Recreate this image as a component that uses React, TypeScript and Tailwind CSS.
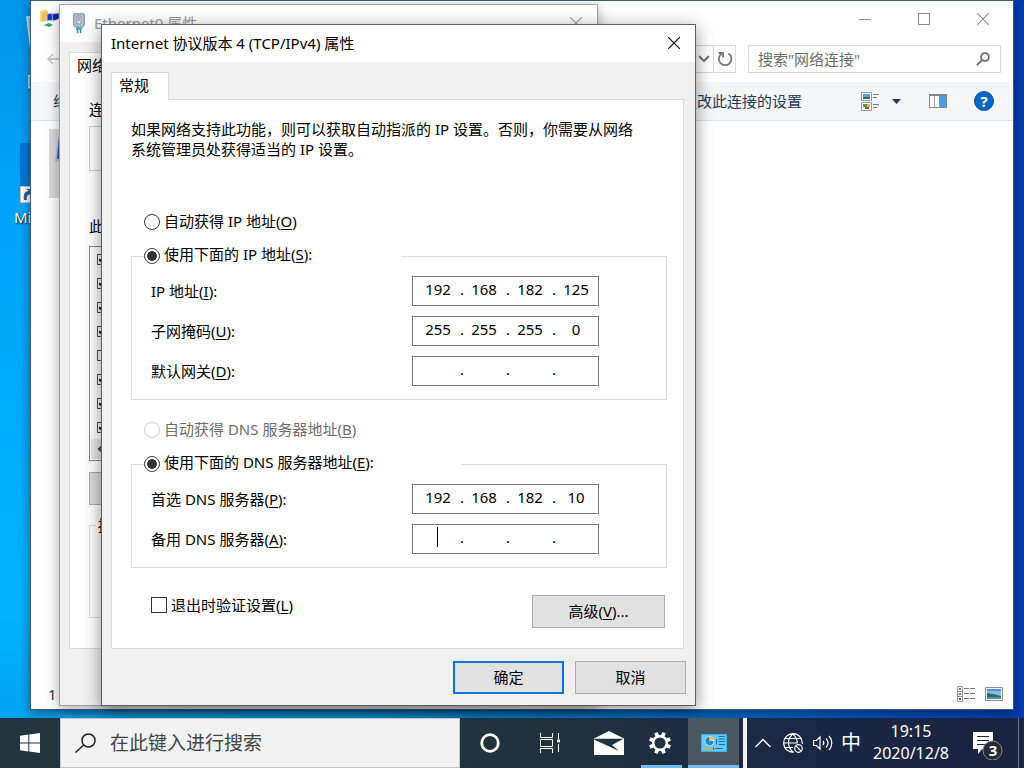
import React from "react";

const FONT = "font-['Noto_Sans','Noto_Sans_CJK_SC',sans-serif]";

function Key({ children }: { children: string }) {
  return <span className="underline decoration-1 underline-offset-2">{children}</span>;
}

function CloseGlyph({ className }: { className: string }) {
  return (
    <svg viewBox="0 0 12 12" className={className} fill="none" stroke="currentColor" strokeWidth="1.1">
      <path d="M0 0L12 12M12 0L0 12" />
    </svg>
  );
}

function IpField({ id, label, value, caret }: { id: string; label: string; value: string[]; caret?: boolean }) {
  return (
    <div role="group" className="relative flex h-[30px] w-[187px] items-center border border-[#7a7a7a] bg-white pb-1 pl-[5px]">
      {value.map((octet, i) => (
        <React.Fragment key={i}>
          {i > 0 && <span className="w-1.5 text-right">.</span>}
          <input
            id={i === 0 ? id : undefined}
            aria-label={`${label} ${i + 1}`}
            defaultValue={octet}
            className="h-5 w-10 bg-transparent text-center outline-none"
          />
        </React.Fragment>
      ))}
      {caret && <span className="absolute left-6 top-0.5 h-5 w-px bg-black" />}
    </div>
  );
}

function FieldRow({ id, name, k, value, caret }: { id: string; name: string; k: string; value: string[]; caret?: boolean }) {
  return (
    <div className="flex items-center">
      <label htmlFor={id} className="w-[261px]">
        {name}(<Key>{k}</Key>):
      </label>
      <IpField id={id} label={name} value={value} caret={caret} />
    </div>
  );
}

const radioClass =
  "size-4 shrink-0 appearance-none rounded-full border border-[#333] bg-white checked:bg-[radial-gradient(circle,#333_0,#333_4.5px,#fff_5.3px)] disabled:border-[#ccc]";

function RadioRow({ id, name, text, k, colon, checked, disabled }: { id: string; name: string; text: string; k: string; colon?: boolean; checked?: boolean; disabled?: boolean }) {
  return (
    <span className="flex h-6 items-center gap-1">
      <input type="radio" id={id} name={name} defaultChecked={checked} disabled={disabled} className={radioClass} />
      <label htmlFor={id} className={disabled ? "pb-0.5 text-[#6d6d6d]" : colon ? "pb-1" : "pb-0.5"}>
        {text}(<Key>{k}</Key>){colon ? ":" : ""}
      </label>
    </span>
  );
}

function IpDialog() {
  return (
    <section className="absolute left-[101px] top-6 isolate flex w-[595px] flex-col border border-[#5f5f5f] bg-[#f0f0f0] shadow-[0_4px_16px_rgba(0,0,0,0.45)]">
      <header className="flex h-[37px] items-center justify-between bg-white pb-0.5 pl-[9px] pr-[15px]">
        <h1>Internet 协议版本 4 (TCP/IPv4) 属性</h1>
        <button aria-label="关闭" className="text-black">
          <CloseGlyph className="size-3" />
        </button>
      </header>
      <div className="flex flex-col pl-[9px] pr-[11px] pt-2.5">
        <button role="tab" className="z-10 -mb-px h-7 w-[58px] border border-b-0 border-[#d9d9d9] bg-white pb-1 pr-3 text-center">
          常规
        </button>
        <div className="flex h-[550px] flex-col border border-[#d9d9d9] bg-white pl-[19px] pr-4 pt-[19px]">
          <p className="h-[41px] leading-5">
            如果网络支持此功能，则可以获取自动指派的 IP 设置。否则，你需要从网络
            <br />
            系统管理员处获得适当的 IP 设置。
          </p>
          <div className="ml-[13px] mt-[50px]">
            <RadioRow id="ip-auto" name="ip" text="自动获得 IP 地址" k="O" />
          </div>
          <fieldset className="mt-2.5 border border-[#dcdcdc] pb-[13px] pl-[19px]">
            <legend className="-ml-[7px] w-[257px]">
              <RadioRow id="ip-manual" name="ip" text="使用下面的 IP 地址" k="S" colon checked />
            </legend>
            <div className="mt-2 flex flex-col gap-2.5">
              <FieldRow id="ip" name="IP 地址" k="I" value={["192", "168", "182", "125"]} />
              <FieldRow id="mask" name="子网掩码" k="U" value={["255", "255", "255", "0"]} />
              <FieldRow id="gateway" name="默认网关" k="D" value={["", "", "", ""]} />
            </div>
          </fieldset>
          <div className="ml-[13px] mt-[18px]">
            <RadioRow id="dns-auto" name="dns" text="自动获得 DNS 服务器地址" k="B" disabled />
          </div>
          <fieldset className="mt-2.5 border border-[#dcdcdc] pb-[13px] pl-[19px]">
            <legend className="-ml-[7px] w-[317px]">
              <RadioRow id="dns-manual" name="dns" text="使用下面的 DNS 服务器地址" k="E" colon checked />
            </legend>
            <div className="mt-2 flex flex-col gap-2.5">
              <FieldRow id="dns1" name="首选 DNS 服务器" k="P" value={["192", "168", "182", "10"]} />
              <FieldRow id="dns2" name="备用 DNS 服务器" k="A" value={["", "", "", ""]} caret />
            </div>
          </fieldset>
          <div className="mt-[27px] flex items-start justify-between pl-5 pr-0.5">
            <span className="flex h-5 items-center gap-1">
              <input type="checkbox" id="validate" className="size-4 appearance-none border border-[#333] bg-white checked:bg-[#333]" />
              <label htmlFor="validate">
                退出时验证设置(<Key>L</Key>)
              </label>
            </span>
            <button className="h-[33px] w-[133px] border border-[#adadad] bg-[#e1e1e1] pb-0.5">
              高级(<Key>V</Key>)...
            </button>
          </div>
        </div>
      </div>
      <footer className="flex justify-end gap-[11px] pb-[11px] pr-[9px] pt-3">
        <button className="h-[33px] w-[111px] border-2 border-[#0078d7] bg-[#e1e1e1] pb-0.5">确定</button>
        <button className="h-[33px] w-[111px] border border-[#adadad] bg-[#e1e1e1] pb-0.5">取消</button>
      </footer>
    </section>
  );
}

function EthernetWindow() {
  const items = [true, true, true, true, false, true, true, true];
  return (
    <section className="absolute left-[59px] top-1 isolate flex h-[702px] w-[539px] flex-col border border-[#a0a0a0] bg-[#f0f0f0] shadow-[0_3px_12px_rgba(0,0,0,0.35)]">
      <header className="flex h-[37px] shrink-0 items-center bg-white pb-0.5 pl-[13px] pr-[15px] text-[#999]">
        <svg viewBox="0 0 12 20" className="mr-[9px] h-5 w-3 shrink-0">
          <path d="M1.5 .8h9l.8 1.8v8.9L9.5 14h-7L.7 11.500V2.600z" fill="#b7c4d3" stroke="#7b8794" strokeWidth="1.100" />
          <path d="M4 3h4v8H4z" fill="#dfe8f0" stroke="#8795a5" />
          <path d="M6 4v4" stroke="#70808f" />
          <path d="M3 14.500h6v2.200H3z" fill="#2f9fc4" />
          <path d="M4.500 16.500V20M7.500 16.500V20" stroke="#2b86a8" strokeWidth="1.500" />
        </svg>
        <h2 className="grow">Ethernet0 属性</h2>
        <button aria-label="关闭">
          <CloseGlyph className="size-3" />
        </button>
      </header>
      <div className="flex grow flex-col pb-14 pl-[9px] pr-2.5 pt-2.5">
        <button role="tab" className="z-10 -mb-px h-7 w-[58px] border border-b-0 border-[#d9d9d9] bg-white pb-1 pl-[7px] text-left">
          网络
        </button>
        <div className="flex grow flex-col border border-[#d9d9d9] bg-white pl-[19px] pr-5 pt-[19px]">
          <p className="h-[27px] leading-5">连</p>
          <div className="h-[45px] shrink-0 border border-[#d0d0d0]" />
          <p className="mb-2.5 mt-[45px] leading-5">此</p>
          <ul className="flex h-[215px] shrink-0 flex-col border border-[#828790] pl-[7px]">
            {items.map((on, i) => (
              <li key={i} className="flex h-6 items-center">
                <input type="checkbox" aria-label={`项目 ${i + 1}`} defaultChecked={on} className="size-[11px] appearance-none border border-[#555] bg-white" />
                {on && (
                  <svg viewBox="0 0 10 10" className="-ml-2.5 size-[9px]" fill="none" stroke="#000" strokeWidth="2">
                    <path d="M1.500 4.500L4 7.500L8.500 2" />
                  </svg>
                )}
              </li>
            ))}
            <li className="-ml-1.5 flex h-5 items-center bg-[#e8e8e8] pl-1.5">
              <svg viewBox="0 0 8 10" className="h-2.5 w-2" fill="none" stroke="#444" strokeWidth="2">
                <path d="M6 1L2 5L6 9" />
              </svg>
            </li>
          </ul>
          <div className="mt-[11px] h-[33px] w-32 shrink-0 border border-[#adadad] bg-[#dadada]" />
          <fieldset className="mt-2.5 h-[103px] border border-[#dcdcdc]">
            <legend className="ml-1.5 px-0.5 leading-5">描</legend>
          </fieldset>
        </div>
      </div>
    </section>
  );
}

function NetworkWindow() {
  return (
    <section className="absolute bottom-2 left-[30px] right-2.5 top-0 isolate flex flex-col border border-[#3c5a85] bg-white shadow-[0_3px_10px_rgba(0,0,0,0.45)]">
      <header className="flex h-9 items-center justify-between pl-[9px] pr-6 text-[#8c8c8c]">
        <svg viewBox="0 0 20 20" className="size-5">
          <path d="M0 2l7-2v11l-7 2z" fill="#f6d980" />
          <path d="M2 3l6-1v9l-6 2z" fill="#e9bf55" />
          <path d="M7 5l6-1v7l-6 1z" fill="#1531c7" stroke="#c3cbe4" />
          <path d="M12 5l7-1v6l-6 2z" fill="#0b23a6" stroke="#c8d2e6" strokeWidth=".7" />
          <path d="M4 16l5-2 4 2-4 2z" fill="#21b24b" />
        </svg>
        <div className="flex items-center gap-[47px]">
          <button aria-label="最小化" className="flex h-3 w-3 items-center">
            <span className="h-px w-3 bg-[#8c8c8c]" />
          </button>
          <button aria-label="最大化" className="size-3 border border-[#8c8c8c]" />
          <button aria-label="关闭">
            <CloseGlyph className="size-3" />
          </button>
        </div>
      </header>
      <div className="flex h-[45px] items-center gap-3 pb-px pl-4 pr-3">
        <svg viewBox="0 0 16 12" className="h-3 w-4 shrink-0" fill="none" stroke="#c4c4c4" strokeWidth="1.500">
          <path d="M16 6H1M6 1L1 6l5 5" />
        </svg>
        <div className="flex h-7 grow justify-end border border-[#d9d9d9]">
          <button aria-label="展开" className="flex w-5 items-center justify-center border-r border-[#d9d9d9]">
            <svg viewBox="0 0 12 8" className="h-2 w-3" fill="none" stroke="#767676" strokeWidth="2">
              <path d="M1 1l5 5 5-5" />
            </svg>
          </button>
          <button aria-label="刷新" className="flex w-[21px] items-center justify-center">
            <svg viewBox="0 0 16 16" className="size-4" fill="none" stroke="#767676" strokeWidth="1.800">
              <path d="M11.500 2.500A6.300 6.300 0 1 1 4.500 2.700M1.500 2h4.500v4.500" />
            </svg>
          </button>
        </div>
        <div className="flex h-7 w-[253px] shrink-0 items-center border border-[#d9d9d9] pl-[9px] pr-2.5">
          <input aria-label="搜索" placeholder={'搜索"网络连接"'} className="w-0 grow outline-none placeholder:text-[#6d6d6d]" />
          <svg viewBox="0 0 14 14" className="size-3.5" fill="none" stroke="#6a6a6a" strokeWidth="1.800">
            <circle cx="9" cy="5" r="3.900" />
            <path d="M6.200 8L.8 13.200" />
          </svg>
        </div>
      </div>
      <div className="flex h-[39px] items-center border-b border-[#e0e4e9] bg-[#f4f6f8] pl-[22px] pr-[19px] text-[#1e395b]">
        <button>组</button>
        <button className="ml-auto">更改此连接的设置</button>
        <button aria-label="视图" className="ml-[59px]">
          <svg viewBox="0 0 18 19" className="h-[19px] w-[18px]">
            <g fill="#fff" stroke="#9a9a9a">
              <path d="M.5 .5h10v8h-10zM.5 10.500h10v8h-10z" />
            </g>
            <path d="M2 2h7v2.500H2z" fill="#5aa6e6" />
            <path d="M2 4.500h7V7H2z" fill="#2d6c73" />
            <path d="M2 12h4v3H2z" fill="#4e9f3a" />
            <path d="M6 12h3v3H6z" fill="#e8b73b" />
            <path d="M4 15h4v2H4z" fill="#c9412f" />
            <path d="M12 2.500h6M12 5.500h4M12 12.500h6M12 15.500h4" stroke="#777" />
          </svg>
        </button>
        <button aria-label="视图选项" className="ml-[13px]">
          <svg viewBox="0 0 9 5" className="h-[5px] w-[9px]" fill="#1e395b">
            <path d="M0 0h9L4.500 5z" />
          </svg>
        </button>
        <button aria-label="预览窗格" className="ml-7">
          <svg viewBox="0 0 18 14" className="h-3.5 w-[18px]">
            <path d="M.5 .5h17v13H.5z" fill="#fff" stroke="#858585" />
            <path d="M0 0h18v2H0z" fill="#858585" />
            <path d="M5.500 2v11" stroke="#aaa" />
            <path d="M10 2h7v11h-7z" fill="#4c9fe3" />
          </svg>
        </button>
        <button aria-label="帮助" className="ml-[27px] flex size-5 items-center justify-center rounded-full border border-[#0b4f96] bg-[#0067c8] font-bold text-white">
          ?
        </button>
      </div>
      <div className="flex grow pl-[18px] pt-2">
        <div className="flex h-[69px] w-44 items-start bg-[#d9d9d9] pl-[5px] pt-1.5">
          <svg viewBox="0 0 30 28" className="h-7 w-[30px]">
            <path d="M4 1L28 0v22L1 27z" fill="#b9c0c8" />
            <path d="M5 3L26 2v18L3 24z" fill="#2350c6" />
          </svg>
        </div>
      </div>
      <footer className="flex h-[31px] items-center justify-between pl-[17px] pr-2.5 text-[#1e395b]">
        <span>1</span>
        <div className="flex items-center gap-2.5">
          <button aria-label="详细信息">
            <svg viewBox="0 0 18 16" className="h-4 w-[18px]">
              <path d="M.5 .5h5v15h-5zM.5 5.500h5M.5 10.500h5" fill="#fff" stroke="#999" />
              <path d="M2 2h2v2H2z" fill="#3b7ed0" />
              <path d="M2 7h2v2H2z" fill="#8d8a26" />
              <path d="M2 12h2v2H2z" fill="#d0391f" />
              <path d="M7 2.500h5M13 2.500h5M7 7.500h5M13 7.500h5M7 12.500h5M13 12.500h5" stroke="#777" />
            </svg>
          </button>
          <button aria-label="大图标">
            <svg viewBox="0 0 18 14" className="h-3.5 w-[18px]">
              <path d="M.5 .5h17v13H.5z" fill="#fff" stroke="#8e8e8e" />
              <path d="M2 2h14v10H2z" fill="#86bdf0" />
              <path d="M2 2h14v2H2z" fill="#4a8fe0" />
              <path d="M2 6l6 1 8 2v1H2z" fill="#2f6b55" />
              <path d="M2 10h14v2H2z" fill="#4d8fb4" />
            </svg>
          </button>
        </div>
      </footer>
    </section>
  );
}

function DesktopIcons() {
  return (
    <>
      <svg viewBox="0 0 30 46" className="absolute left-[26px] top-4 h-[46px] w-[30px]">
        <path d="M1 1h28l-4 44H6z" fill="#8fc4e6" stroke="#d5ecf8" strokeWidth="1.500" />
      </svg>
      <span className="absolute left-[27px] top-[71px] text-white [text-shadow:1px_1px_2px_#000]">回</span>
      <svg viewBox="0 0 43 60" className="absolute left-5 top-[143px] h-[60px] w-[43px]">
        <path d="M0 0h43v60H0z" fill="#0078d7" />
        <path d="M.5 43.500h16v16H.5z" fill="#fff" stroke="#c9c9c9" />
        <path d="M4 57c-1-6 1-9 5-9l-3-2h8v8l-2-3c-4 0-6 2-5 6z" fill="#2a5fa8" />
      </svg>
      <span className="absolute left-3.5 top-[207px] text-white [text-shadow:1px_1px_2px_#000]">Mi</span>
    </>
  );
}

function Taskbar() {
  return (
    <nav className="flex h-[50px] shrink-0 items-stretch bg-[linear-gradient(90deg,#22353e,#20323f_55%,#1a2744_80%,#19243f)] text-white">
      <button aria-label="开始" className="flex w-[60px] items-center justify-center">
        <svg viewBox="0 0 20 20" className="size-5" fill="#fff">
          <path d="M0 2.800l8.300-1.200v8H0zM9.300 1.400L20 0v9.600H9.300zM0 10.500h8.300v8L0 17.300zM9.300 10.500H20V20L9.300 18.600z" />
        </svg>
      </button>
      <div className="flex w-[400px] items-center gap-3.5 border border-[#c4c4c4] bg-[#f2f2f2] pl-3.5">
        <svg viewBox="0 0 21 20" className="h-5 w-[21px] shrink-0" fill="none" stroke="#222" strokeWidth="1.500">
          <circle cx="13.500" cy="7.500" r="6.500" />
          <path d="M8.700 12L.5 19.500" />
        </svg>
        <input aria-label="搜索" placeholder="在此键入进行搜索" className="w-0 grow text-[19px] outline-none placeholder:text-[#444]" />
      </div>
      <button aria-label="Cortana" className="flex w-[60px] items-center justify-center">
        <svg viewBox="0 0 20 20" className="size-5" fill="none" stroke="#fff" strokeWidth="2.800">
          <circle cx="10" cy="10" r="8.300" />
        </svg>
      </button>
      <button aria-label="任务视图" className="flex w-[60px] items-center justify-center">
        <svg viewBox="0 0 20 20" className="size-5" fill="none" stroke="#fff">
          <path d="M.5 0v4.500h12V0M.5 20v-4.500h12V20M.5 6.500h12v7H.5zM18.500 0v6M18.500 11v8" />
          <path d="M17 6.500h3v3h-3z" fill="#fff" stroke="none" />
        </svg>
      </button>
      <button aria-label="邮件" className="flex w-[58px] items-center justify-center">
        <svg viewBox="0 0 30 24" className="h-6 w-[30px]">
          <path d="M0 7.500L15 0l15 7.500V24H0z" fill="#fff" />
          <path d="M.5 7.700h29L18 14l7 6L0 8.500z" fill="#20323f" />
        </svg>
      </button>
      <button aria-label="设置" className="ml-[3px] flex w-[41px] items-center justify-center border-b-[3px] border-[#76b9ed] pr-1 pt-0.5">
        <svg viewBox="0 0 24 24" className="size-6">
          <g stroke="#fff" strokeWidth="3.800">
            <path d="M8 1.800l8 20.400M16 1.800L8 22.200M1.800 8l20.400 8M1.800 16l20.400-8" />
          </g>
          <circle cx="12" cy="12" r="8" fill="#fff" />
          <circle cx="12" cy="12" r="5.600" fill="#20313f" />
        </svg>
      </button>
      <button aria-label="控制面板" className="ml-1.5 flex w-[51px] items-center justify-center border-b-[3px] border-[#76b9ed] bg-[#4a5863] pt-0.5">
        <svg viewBox="0 0 26 18" className="h-[18px] w-[26px]">
          <path d="M0 0h26v18H0z" fill="#3fb0ea" />
          <path d="M1 1h24v16H1z" fill="#64c8f8" />
          <circle cx="8.500" cy="7" r="4.800" fill="#d8f1ff" />
          <path d="M8.500 7V2.800a4.200 4.200 0 1 0 4.200 4.200z" fill="#2488d8" />
          <path d="M9 6.500V2A4.500 4.500 0 0 1 13.500 6.500z" fill="#f6c25b" />
          <path d="M17.500 2.500h6.500M17.500 5h6.500M17.500 7.500h6.500M17.500 10.500h6.500M15.500 5v5.500" stroke="#1673b8" />
          <path d="M3.500 14.500h9" stroke="#f6a21b" strokeWidth="1.500" />
          <path d="M14 14.500h8M12.500 13v3" stroke="#1673b8" />
        </svg>
      </button>
      <div className="ml-1 w-1 bg-[#f0f0f0]" />
      <div className="ml-auto flex items-center">
        <button aria-label="显示隐藏的图标">
          <svg viewBox="0 0 16 10" className="h-2.5 w-4" fill="none" stroke="#fff" strokeWidth="1.300">
            <path d="M.5 9L8 1.500 15.500 9" />
          </svg>
        </button>
        <button aria-label="网络" className="ml-3">
          <svg viewBox="0 0 20 20" className="size-5" fill="none" stroke="#fff" strokeWidth="1.200">
            <path d="M11 19.200a9.300 9.300 0 1 1 8.200-8.200M10 .8c-6 5-6 13 0 18.400M10 .8c3 3 4.300 6 4.300 9.500M.8 10H14M2.500 5.500h15M2.500 14.500H10" />
            <circle cx="15.500" cy="15.500" r="3.800" />
            <path d="M12.900 12.900l5.200 5.200" />
          </svg>
        </button>
        <button aria-label="音量" className="ml-2.5">
          <svg viewBox="0 0 20 18" className="h-[18px] w-5" fill="none" stroke="#fff" strokeWidth="1.200">
            <path d="M.6 6.500h2.800L7 3v12l-3.600-3.500H.6zM10 7c1 1.200 1 2.800 0 4M13 4.500c2.500 2.700 2.500 6.300 0 9M16 2c3.700 4 3.700 10 0 14" />
          </svg>
        </button>
        <span className="ml-2 text-[20px] leading-6">中</span>
        <time className="ml-3 pb-0.5 text-center text-base leading-[22px]">
          19:15
          <br />
          2020/12/8
        </time>
        <button aria-label="通知" className="relative ml-6 h-[34px] w-[30px]">
          <svg viewBox="0 0 30 34" className="h-[34px] w-[30px]">
            <path d="M0 6h20v17H9l-4 5v-5H0z" fill="#fff" />
            <path d="M4 10.500h12M4 14.500h12M4 18.500h12" stroke="#1b2740" strokeWidth="1.200" />
            <circle cx="19.500" cy="24.500" r="9.500" fill="#252c36" stroke="#858b94" />
          </svg>
          <span className="absolute bottom-0 left-2.5 w-5 text-center font-bold">3</span>
        </button>
        <div className="ml-[15px] mr-[5px] h-[50px] w-px bg-[#6c7482]" />
      </div>
    </nav>
  );
}

export default function App() {
  return (
    <main className={`${FONT} flex h-screen flex-col overflow-hidden text-[15px] leading-5 text-black`}>
      <div className="relative grow overflow-hidden bg-[linear-gradient(90deg,transparent_0%,transparent_4%,#0098e0_35%,#0068c8_70%,#053bb0_100%),linear-gradient(180deg,#0094ea,#00a4fa_30%,#00b2ff_85%,#00a4f0)]">
        <DesktopIcons />
        <NetworkWindow />
        <EthernetWindow />
        <IpDialog />
      </div>
      <Taskbar />
    </main>
  );
}
